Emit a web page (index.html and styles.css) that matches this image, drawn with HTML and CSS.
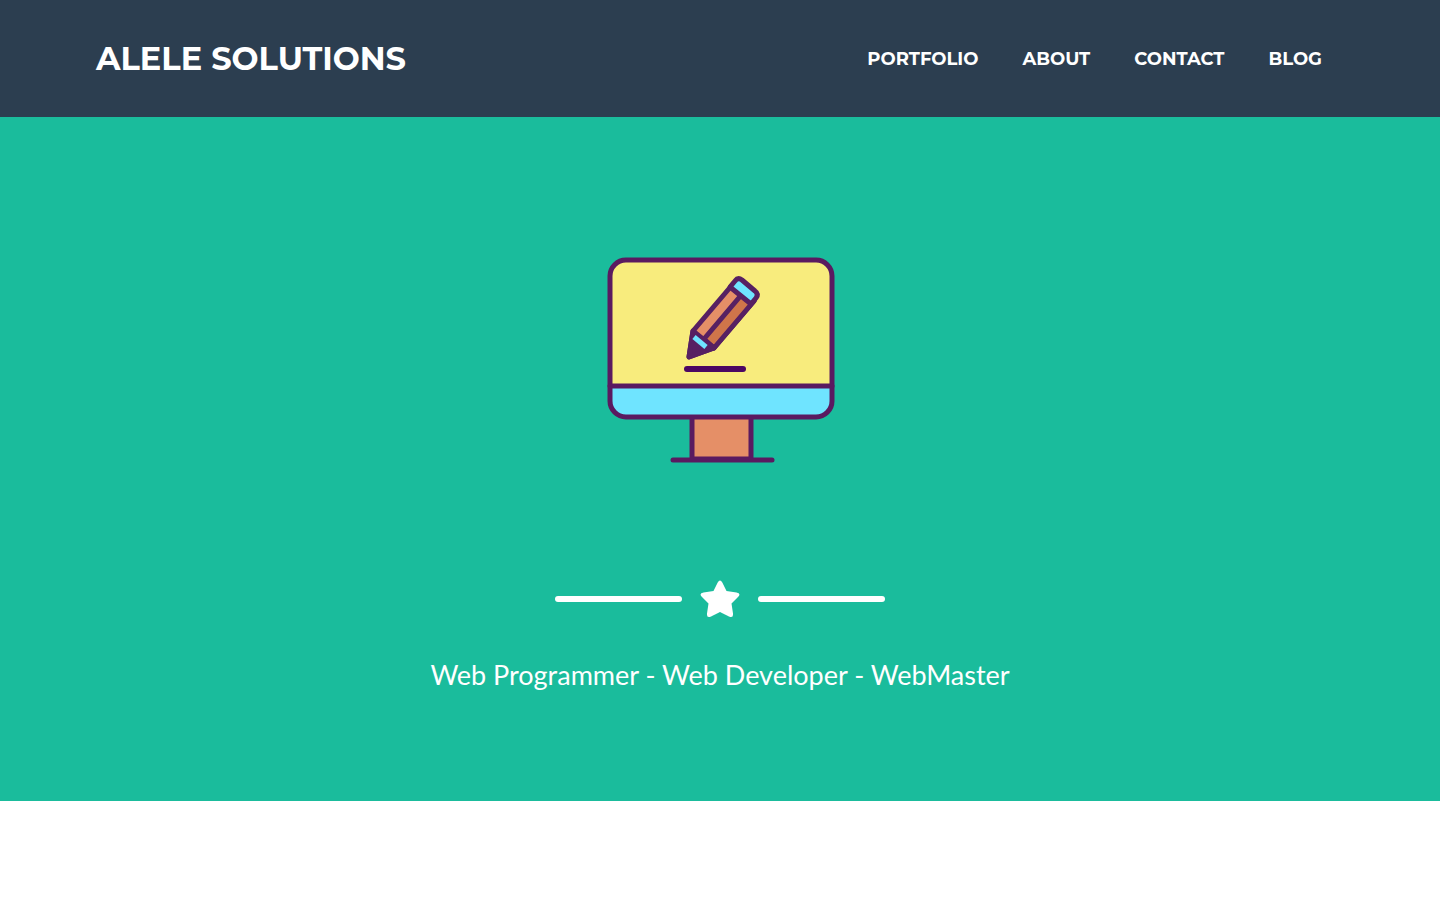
FILE: index.html
```html
<!DOCTYPE html>
<html lang="en">

<head>
    <meta charset="UTF-8">
    <meta name="viewport" content="width=device-width, initial-scale=1.0">
    <title>Alele Solutions</title>
    <link rel="stylesheet" href="styles.css">
</head>

<body>
    <header class="navbar">
        <a class="navbar-brand" href="#">ALELE SOLUTIONS</a>
        <nav class="navbar-nav">
            <a class="nav-link" href="#portfolio">PORTFOLIO</a>
            <a class="nav-link" href="#about">ABOUT</a>
            <a class="nav-link" href="#contact">CONTACT</a>
            <a class="nav-link" href="#blog">BLOG</a>
        </nav>
    </header>

    <main class="masthead">
        <svg class="masthead-avatar" viewBox="0 0 240 220" fill="none" stroke="#5a1a60" stroke-width="5" stroke-linecap="round" stroke-linejoin="round" aria-hidden="true">
            <!-- stand -->
            <path d="M92 166h59v43H92z" fill="#e58f67" />
            <path d="M73 210h99" />
            <!-- screen -->
            <path d="M10 136V25a15 15 0 0 1 15-15h192a15 15 0 0 1 15 15v111z" fill="#f8ec7d" stroke="none" />
            <path d="M10 136h222v15a15 15 0 0 1-15 15H25a15 15 0 0 1-15-15z" fill="#6fe4ff" stroke="none" />
            <rect x="10" y="10" width="222" height="157" rx="16" />
            <path d="M10 136h222" />
            <path d="M87 119h56" stroke="#4b0763" stroke-width="6" />
            <!-- pencil -->
            <g stroke="#572062">
                <path d="M93 81L133 34L154 51L114 98L89 107z" fill="#e58f67" />
                <path d="M104 89L143 43L154 51L114 98z" fill="#cf754a" />
                <path d="M93 81L114 98L89 107z" fill="#572062" />
                <path d="M130 37l5-6q3-4 7-1l13 11q4 3 1 7l-5 6z" fill="#6fe4ff" />
                <path d="M94 87l12 10" stroke="#6fe4ff" stroke-width="5" stroke-linecap="butt" />
            </g>
        </svg>

        <div class="divider">
            <div class="divider-line"></div>
            <svg class="divider-icon" viewBox="0 0 40 40" aria-hidden="true">
                <path d="M17.700 3.500Q20 -0.500 22.300 3.500L26.500 12L36.500 13.500Q41.500 14.500 38 18L31.500 24.500L33 34.500Q33.500 39.500 29 37.500L20 33L11 37.500Q6.500 39.500 7 34.500L8.500 24.500L2 18Q-1.500 14.500 3.500 13.500L13.500 12z" fill="#fff" />
            </svg>
            <div class="divider-line"></div>
        </div>

        <p class="masthead-subheading">Web Programmer - Web Developer - WebMaster</p>
    </main>
</body>

</html>
```

FILE: styles.css
```css
* {
    box-sizing: border-box;
}

body {
    margin: 0;
    background: #fff;
    font-family: Lato, sans-serif;
}

.navbar {
    display: flex;
    justify-content: space-between;
    align-items: center;
    padding: 39px 96px 38px;
    background: #2c3e50;
    font-family: Montserrat, Inter, sans-serif;
    font-weight: 700;
}

.navbar a {
    color: #fff;
    text-decoration: none;
}

.navbar-brand {
    font-size: 32px;
    line-height: 40px;
}

.navbar-nav {
    display: flex;
}

.nav-link {
    padding: 0 22px;
    font-size: 18px;
    line-height: 24px;
}

.masthead {
    display: flex;
    flex-direction: column;
    align-items: center;
    padding: 133px 24px 106px;
    background: #1abc9c;
    color: #fff;
}

.masthead-avatar {
    width: 240px;
    height: 220px;
}

.divider {
    display: flex;
    align-items: center;
    gap: 18px;
    margin: 109px 0 36px;
}

.divider-line {
    width: 127px;
    height: 6px;
    border-radius: 3px;
    background: #fff;
}

.divider-icon {
    width: 40px;
    height: 40px;
}

.masthead-subheading {
    margin: 0;
    font-size: 27px;
    line-height: 40px;
    text-align: center;
}
```
